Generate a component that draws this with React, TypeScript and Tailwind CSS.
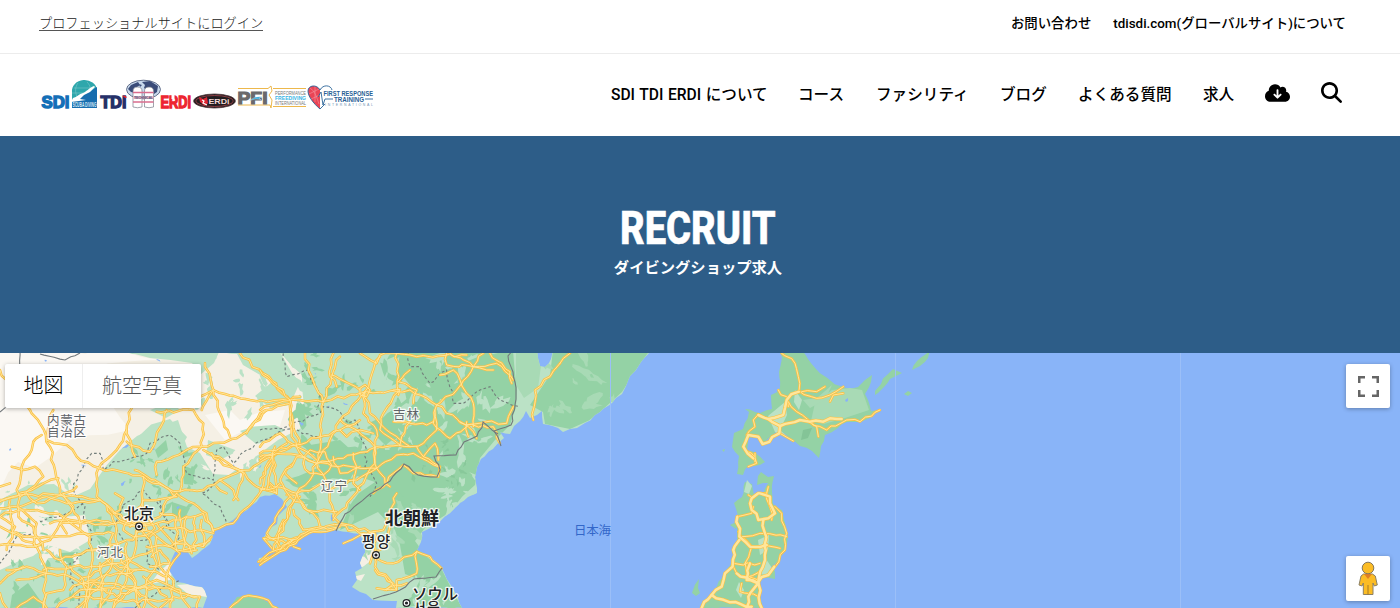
import { FaCloudArrowDown, FaMagnifyingGlass } from 'react-icons/fa6';

const NAV_ITEMS = [
  { label: 'SDI TDI ERDI について', width: 'w-[155px] [word-spacing:0.7px]' },
  { label: 'コース', width: 'w-[46px]' },
  { label: 'ファシリティ', width: 'w-[92px]' },
  { label: 'ブログ', width: 'w-[46px]' },
  { label: 'よくある質問', width: 'w-[93px]' },
  { label: '求人', width: 'w-[30px]' },
];

// Small deterministic generator, so the terrain is the same on every render
function createRandom(seed: number) {
  let s = seed;
  return () => {
    s = (s * 16807) % 2147483647;
    return s / 2147483647;
  };
}

// Breaks every long segment up and nudges the new points, for natural looking lines
function wobble(points: string, amount = 5, seed = 7) {
  const rnd = createRandom(seed + points.length * 31);
  const pts = points.split(' ').map((p) => p.split(',').map(Number));
  const out: string[] = [];
  pts.forEach(([x, y], i) => {
    out.push(`${x},${y}`);
    const next = pts[i + 1];
    if (!next) return;
    const steps = Math.floor(Math.hypot(next[0] - x, next[1] - y) / (amount < 5 ? 5 : 16));
    for (let k = 1; k < steps; k++) {
      const t = k / steps;
      const px = x + (next[0] - x) * t + (rnd() - 0.5) * amount;
      const py = y + (next[1] - y) * t + (rnd() - 0.5) * amount;
      out.push(`${px.toFixed(1)},${py.toFixed(1)}`);
    }
  });
  return out.join(' ');
}

function makePatches(x: number, y: number, w: number, h: number, count: number, size: number, seed: number) {
  const rnd = createRandom(seed);
  return Array.from({ length: count }, () => {
    const cx = x + rnd() * w;
    const cy = y + rnd() * h;
    const r = size * (0.4 + rnd());
    const tilt = rnd() * 3;
    return Array.from({ length: 11 }, (_, k) => {
      const a = (k / 11) * Math.PI * 2;
      const d = r * (0.35 + rnd() * 0.95);
      const dx = Math.cos(a) * d * 1.5;
      const dy = Math.sin(a) * d * 0.6;
      return `${(cx + dx * Math.cos(tilt) - dy * Math.sin(tilt)).toFixed(1)},${(cy + dx * Math.sin(tilt) + dy * Math.cos(tilt)).toFixed(1)}`;
    }).join(' ');
  });
}

const MAINLAND =
  '0,350 537,350 538,358 540,366 545,367 551,359 553,350 651,350 641,362 636,370 630,376 626,386 622,394 616,398 612,403 600,412 585,423 577,428 570,429 563,432 558,428 543,424 542,411 537,415 530,418 526,411 520,421 514,426 510,434 500,432 504,438 497,444 493,449 481,459 477,467 475,477 477,493 468,497 460,503 450,513 437,524 422,532 421,542 417,550 426,555 435,561 442,569 450,584 458,598 462,608 396,608 397,601 373,600 366,594 360,592 352,587 357,580 355,572 362,568 360,563 365,553 366,544 360,534 348,532 336,530 320,531 310,532 296,540 280,549 268,560 258,562 259,558 270,557 277,552 271,545 263,539 267,532 277,524 278,516 287,507 282,499 275,494 260,497 247,510 233,520 221,527 213,533 210,544 202,550 192,558 187,551 175,552 170,565 170,572 177,582 190,585 202,587 207,597 203,608 0,608';

const ISLANDS = [
  '230,608 237,597 250,594 262,599 280,608',
  '780,350 802,350 808,359 816,369 831,381 840,386 850,389 858,387 865,380 872,375 871,382 865,394 868,400 871,411 880,410 868,419 860,422 847,422 838,428 825,435 821,446 819,458 812,451 800,446 785,434 778,430 764,443 758,437 748,438 747,450 754,452 765,462 755,466 749,465 743,475 737,474 739,456 732,447 734,433 743,429 749,412 745,409 760,413 772,409 771,395 780,388 779,372 782,358',
  '757,485 758,476 761,472 768,477 774,476 772,492 773,504 782,510 785,523 788,537 784,552 778,562 770,568 775,571 775,579 763,577 759,588 762,608 701,608 714,592 724,573 731,564 736,545 737,530 739,520 737,512 734,503 742,497 745,482 752,484 754,495 763,495 768,483 763,483',
  '693,590 699,579 698,588 700,593 696,596 692,593',
  '730,525 734,523 739,522 736,529',
  '722,450 725,449 724,452',
  '912,370 917,361 926,354 930,350 928,358 920,366',
  '904,394 908,391 912,393 908,396',
  '875,395 875,391 881,384 887,375 893,369 902,373 896,376 890,379 884,387 878,393',
];

const BEIGE = [
  '0,350 278,350 292,366 302,375 301,428 278,440 258,455 238,468 229,475 213,474 200,453 187,447 178,420 155,428 137,436 120,450 106,466 90,489 72,497 54,484 28,485 0,500',
  '0,518 25,508 42,518 85,515 90,540 70,552 48,545 33,556 0,570',
  '357,570 363,554 374,547 373,559 364,566',
  '352,577 365,574 361,581',
  '177,585 190,584 204,588 207,597 188,594',
  '150,584 176,557 170,580',
];

const PALE = ['0,350 120,350 160,360 90,370 130,430 70,440 35,468 18,462 0,490', '205,415 230,410 240,420 285,410 280,426 245,430 225,440'];

const DARK_LAND = [
  '400,350 513,350 517,390 516,407 510,425 495,440 480,458 475,485 450,512 425,528 415,541 426,556 442,570 462,608 403,608 420,580 405,574 400,545 395,530 378,512 340,530 350,505 375,482 345,472 350,455 390,450 370,430 395,400 410,385 398,370',
  '553,350 650,350 636,370 622,392 600,412 570,429 545,424 543,412 530,405 540,390 550,375',
  '310,445 340,440 360,458 350,480 330,478 305,490 285,480 320,467',
  '12,595 28,583 40,600 48,608 10,608',
  '182,465 195,470 193,485 184,484',
  '155,450 166,440 168,450 158,458',
  '60,553 78,552 72,566 55,562',
  '172,502 190,508 184,520 172,514',
];

const GREEN_IN_BEIGE = [
  '120,350 220,350 214,363 200,375 192,363 150,358',
  '236,352 280,352 292,373 300,382 290,405 270,408 255,396 272,382 255,372 243,365',
  '140,435 170,419 187,437 181,448 188,466 170,456 140,460',
  '20,490 42,482 50,490 30,502 5,509 0,500',
  '208,440 238,451 220,460 206,455',
  '240,431 275,425 285,430 256,444',
  '150,410 172,402 180,410 166,418',
];

type Tile = { x: number; roads: string[] };

// Road lines are kept per map tile, in tile units of a third of a pixel
const ROAD_TILES: Tile[] = [
  {
    x: 0,
    roads: [
      '90,180 120,220 150,290 165,360 180,430 235,500 240,540', '160,180 145,230 140,270 200,285 230,320 300,355 430,380 520,425 610,420 660,390 760,350 900,280',
      '125,255 100,275 95,300 65,350 50,420 60,440', '0,60 20,90 90,180', '35,350 70,360 105,350 130,380 60,440', '0,450 50,440 130,400 175,385',
      '395,175 380,240 350,300 295,355', '380,240 405,320', '380,275 450,305 500,180', '470,185 580,180 610,220 605,290 550,350 540,425',
      '615,40 640,120 605,180', '600,140 640,120 750,150 870,152', '640,120 665,200 690,260', '720,10 790,70 870,150 880,235 900,290',
      '870,152 900,140', '740,250 780,190 870,160', '560,300 605,290 710,265 755,230 800,180',
      '295,355 290,440 320,465 350,540 350,600', '405,360 480,400 530,440 470,450 430,450 400,490', '345,430 370,445 360,480 340,490',
      '470,375 470,335 520,320 560,300', '635,310 670,345 715,360 770,410 830,430', '610,300 670,330 730,370 700,450', '830,310 790,370 785,420 700,520 640,540',
      '530,430 580,460 620,490 640,545', '660,390 700,420 715,450', '650,410 680,430', '880,340 855,370 890,400',
      '830,430 810,400 780,420', '860,280 820,310 830,430',
      '0,455 60,435 180,435 300,450 345,490 416,530', '0,475 50,470 110,520 105,590 150,570 180,520 290,510 416,530',
      '0,500 60,480 160,490 250,520 340,520', '20,600 45,530 0,500', '30,450 40,550 110,590 140,660 130,774', '0,530 70,560 140,560 250,550 340,550',
      '60,440 55,500 100,530 130,600', '240,540 270,560 275,640 250,774', '140,600 180,630 280,600 400,570 416,530', '190,430 220,470 180,520 200,550',
      '80,430 110,460 170,440 230,410', '60,470 140,440 200,460 300,450', '150,520 200,510 240,540', '0,585 80,590 120,585',
      '350,600 330,660 290,720 230,774', '340,550 330,590 280,600', '130,660 220,650 290,650 380,630 460,600', '20,660 80,650 140,670 210,680 290,720 400,710 520,720 590,740',
      '0,700 50,660 70,650', '20,774 0,730', '50,690 140,670', '180,600 200,650 190,720 140,730 130,774',
      '416,530 400,620 350,690 300,774', '416,530 450,570 470,640 440,690 430,774', '416,530 540,510 610,490 640,545', '416,530 480,500 500,450 530,430',
      '416,530 470,560 540,610 510,650 500,700', '416,530 430,480 430,380', '416,530 360,510 320,465', '470,520 520,580 610,590 635,560',
      '370,540 385,510 415,500 450,510 465,535 440,555 400,560 370,540', '390,530 410,515 435,520 440,540 410,545',
      '480,490 530,500 530,600 590,600', '540,480 550,560 575,610', '560,500 550,600 630,570', '585,500 585,600', '605,510 610,590',
      '450,560 490,530 640,550', '440,590 510,590 550,570', '455,620 480,600 510,640 450,650', '470,560 480,650 520,690 510,774',
      '380,580 380,690 340,774', '355,600 420,650 500,680', '210,720 270,690 350,670 440,660', '240,690 300,660 350,600', '260,774 280,700 350,740 470,690 540,720',
      '420,774 400,680 360,620', '250,700 330,700 410,720 470,774', '300,600 330,640 410,660', '170,774 240,720 320,720', '480,774 520,740 600,740 590,774',
      '340,774 390,720 460,710', '540,720 570,774', '50,774 100,740 140,774', '860,435 900,440', '890,440 860,510 820,570 790,565 820,600 900,560',
      '220,740 300,745 380,755 520,750', '300,640 310,700 300,774', '340,650 400,690 420,740', '210,650 250,690 260,740', '430,680 500,740',
      '775,635 830,610 900,565', '850,510 835,560 830,605', '800,560 880,585', '690,774 730,740 790,745 830,774', '0,410 30,400',
    ],
  },
  {
    x: 260,
    roads: [
      '0,60 90,150 95,240 110,290 170,330', '0,180 85,152 185,155 320,125 410,125 450,120 530,165 620,225 700,230 720,280', '135,10 155,80 190,155 175,330',
      '240,20 215,80 190,155', '360,20 330,90 315,125 240,210 190,300 170,340', '315,125 310,190 350,240 345,340 310,400 220,510', '220,10 210,80 230,110', '215,75 300,120',
      '300,10 350,40 360,15 410,10 470,20 620,15', '410,10 415,125 370,190 360,240 420,285', '315,125 330,190 380,240 450,290 490,280 530,240 525,180', '450,60 415,95 470,120 460,160',
      '540,75 580,60 600,90 620,130 640,160 640,230', '530,165 590,120 640,50 670,10', '560,10 560,45 640,50 710,40 760,90', '570,10 640,50 700,60', '690,10 750,65 755,100', '620,225 680,215 740,220 760,170',
      '620,215 625,260', '530,165 520,220 570,265 620,230', '400,215 500,225 520,215', '450,215 425,260 420,285', '0,310 110,285 240,240 300,210', '0,290 60,250 110,290 130,320', '0,400 40,310 0,330',
      '0,320 50,310 130,320 170,340 250,325 350,290 450,290', '170,340 300,355 350,355 410,315 460,310 535,350', '240,210 290,240 345,290 350,355 390,410', '170,340 150,390 110,430 40,600', '170,340 110,320 60,390 90,440 160,490 180,530',
      '170,340 210,420 220,500 240,520', '200,420 290,390 350,355', '30,400 110,430 200,400', '45,290 20,420 60,400', '90,440 70,470 20,550 60,590', '110,430 140,480 230,485', '100,480 130,540 240,530',
      '130,340 150,300 195,305 215,345 190,375 150,370 130,340', '300,115 315,105 330,120 320,140 300,135 300,115', '400,120 420,118 415,135', '600,215 625,230 640,245 650,265',
      '0,635 50,600 150,540 240,525 300,550 370,540 410,430', '0,645 60,605 160,545 230,535', '240,240 260,260 300,240 340,250', '280,310 290,350 280,400 300,420', '220,320 240,370 300,350', '340,430 380,400 400,370 430,345 460,370 535,380 540,350 490,320 470,290',
      '490,320 525,280 535,330', '20,560 100,570 60,600', '100,590 120,597', '240,520 345,550 345,650 390,690 410,720 350,715', '350,625 400,640 470,605 510,620 545,655', '470,605 470,670 410,690 410,720',
      '345,660 400,700 380,720', '375,720 440,700', '330,640 340,610 380,590 390,530', '820,210 825,120 870,80 900,40', '900,40 930,10', '250,580 310,550',
    ],
  },
  {
    x: 680,
    roads: [
      '305,10 345,40 355,80 357,125', '295,120 320,140 325,170', '360,125 410,145 450,135 490,110', '365,125 410,125 435,110', '450,155 460,135 490,130',
      '325,155 350,185 385,210', '390,215 440,240 500,210 540,215 600,180', '385,215 410,230 415,260', '300,250 340,273', '200,255 225,230 220,210 235,193', '190,290 215,310 230,340 205,350', '225,335 225,310',
      '205,435 220,445 235,430 260,430 270,470 275,510', '285,470 305,490 320,550 315,600 285,650', '172,500 215,490 220,470', '185,560 240,550 320,560', '175,545 215,590 195,640 200,690',
      '160,640 190,645 240,640', '160,650 170,670 205,680 235,690', '260,430 265,410', '185,700 180,725 235,740', '205,680 240,665', '250,590 300,595',
    ],
  },
];

const MAIN_ROADS = [
  '357,125 320,150 310,195 265,207 235,195', '265,207 300,228 360,210 390,215 430,215 450,205 485,207', '300,228 298,250 248,282 235,260 205,255 190,290 220,325',
  '235,430 215,445 215,480 235,510 265,505 285,490 270,440 240,430', '250,510 255,550 255,630 235,700 205,740 200,774', '172,500 178,560 210,590 260,585', '178,570 160,600 158,650 135,670 125,710 95,735 65,774',
  '170,670 235,700 245,774', '95,735 150,757 215,770', '210,640 200,690 235,700', '283,650 265,675 235,695',
];

const BORDERS = [
  '0,412 14,400 19,386 20,350', '40,354 65,360 80,353', '513,350 508,356 513,372 516,392 515,405 511,425 494,431 498,437 501,446',
  '498,434 483,422 477,436 464,442 456,455 434,456 440,470 437,477 418,475 404,464 390,481 370,494 345,514 336,531', '373,599 390,594 400,590 414,579 436,577 442,568',
];

const PROVINCES = [
  '110,515 100,550 50,560 35,590 0,640', '220,420 235,370 275,310 300,310 310,360 340,335 440,310 450,280 510,255 540,280 560,370 640,390 650,300 670,290 700,340 740,300 850,240 880,235 940,260 970,260',
  '220,420 255,470 250,510 275,545 265,600 210,640 210,690 240,720 240,774', '120,515 200,490 250,460', '660,390 605,430 660,470 680,520',
  '370,465 430,420 480,470 500,530 440,570 370,570 345,530 370,465', '450,570 440,640 500,660', '480,450 510,540 540,560 520,590', '405,774 490,710 540,690',
  '780,240 860,230 960,190 970,170 1020,185 1045,220 1065,210 1100,300 1095,350 1130,400 1110,440', '850,10 860,80 925,60 960,140 950,180', '1225,10 1230,50 1260,50 1290,100 1340,60 1360,160 1390,160 1440,120 1470,110 1500,150 1560,170',
];

const PATCH_LAYERS = [
  { color: '#94d2a5', items: makePatches(300, 350, 100, 160, 60, 6, 41) },
  { color: '#bbe2c6', items: makePatches(385, 355, 115, 100, 42, 6, 93) },
  { color: '#bbe2c6', items: makePatches(440, 450, 40, 65, 18, 6, 35) },
  { color: '#a8dab5', items: makePatches(350, 500, 80, 60, 16, 5, 71) },
  { color: '#bbe2c6', items: makePatches(400, 560, 50, 45, 12, 4, 61) },
  { color: '#a8dab5', items: makePatches(545, 350, 90, 65, 14, 6, 55) },
  { color: '#94d2a5', items: makePatches(10, 510, 100, 95, 34, 4, 17) },
  { color: '#94d2a5', items: makePatches(120, 450, 80, 60, 24, 3.5, 38) },
  { color: '#f5f0e5', items: makePatches(0, 505, 100, 60, 38, 6, 29) },
  { color: '#f5f0e5', items: makePatches(205, 440, 55, 35, 14, 4, 77) },
  { color: '#bbe2c6', items: makePatches(200, 355, 100, 60, 28, 5, 67) },
  { color: '#bbe2c6', items: makePatches(0, 480, 80, 40, 16, 4, 12) },
  { color: '#89b4f8', items: makePatches(10, 360, 390, 180, 20, 1.6, 19) },
  { color: '#88c89a', items: makePatches(410, 440, 60, 70, 22, 3, 8) },
];

const JAPAN_PATCHES = [
  { color: '#a8dab5', points: '815,403 832,390 850,388 862,390 869,410 845,418 824,424 811,421' },
  { color: '#bbe2c6', points: '768,416 785,402 787,415 780,430 791,440 775,432' },
  { color: '#bbe2c6', points: '795,390 802,400 799,410 794,402' },
  { color: '#a8dab5', points: '803,400 817,398 832,385 825,400 810,408' },
  { color: '#bbe2c6', points: '766,559 772,568 770,576 760,574' },
  { color: '#bbe2c6', points: '739,582 744,590 741,598 736,590' },
  { color: '#bbe2c6', points: '758,540 769,535 768,550 760,555' },
  { color: '#84c497', points: '803,430 812,428 808,438 801,440' },
  { color: '#bbe2c6', points: '744,492 747,480 752,486 749,494' },
  { color: '#89b4f8', points: '845,400 848,398 848,401 846,402' },
];

function Roads({ lines, main }: { lines: string[]; main?: boolean }) {
  return (
    <g fill="none" strokeLinejoin="round" strokeLinecap="round">
      {lines.map((line, i) => (
        <polyline key={`a${i}`} points={wobble(line, 10, i)} stroke="#fbc144" strokeWidth={main ? 11 : 7.5} />
      ))}
      {lines.map((line, i) => (
        <polyline key={`b${i}`} points={wobble(line, 10, i)} stroke="#ffe69b" strokeWidth={main ? 7.5 : 3} />
      ))}
    </g>
  );
}

function CityDot({ x, y }: { x: number; y: number }) {
  return (
    <g>
      <circle cx={x} cy={y} r="3.4" fill="#fff" stroke="#202124" strokeWidth="1.2" />
      <circle cx={x} cy={y} r="1.6" fill="#202124" />
    </g>
  );
}

function MapCanvas() {
  return (
    <svg
      className="block h-full w-full font-['Roboto','Noto_Sans_CJK_JP','Noto_Sans_CJK_KR',sans-serif]"
      viewBox="0 353 1400 255"
      aria-label="地図"
    >
      <defs>
        <clipPath id="land">
          <polygon points={wobble(MAINLAND, 2)} />
        </clipPath>
      </defs>
      <rect y="350" width="1400" height="260" fill="#89b4f8" />
      <polygon points={wobble(MAINLAND, 2)} fill="#bbe2c6" />
      <g clipPath="url(#land)">
        {BEIGE.map((p) => <polygon key={p} points={wobble(p, 9)} fill="#f5f0e5" />)}
        {PALE.map((p) => <polygon key={p} points={wobble(p, 8)} fill="#fbf8f3" />)}
        {GREEN_IN_BEIGE.map((p) => <polygon key={p} points={wobble(p, 8)} fill="#bbe2c6" />)}
        {DARK_LAND.map((p) => <polygon key={p} points={wobble(p, 8)} fill="#94d2a5" />)}
        <polygon points="516,350 538,350 541,366 538,388 524,398 516,385" fill="#a8dab5" />
        {PATCH_LAYERS.map(({ color, items }, i) => (
          <g key={i} fill={color}>{items.map((p) => <polygon key={p} points={p} />)}</g>
        ))}
      </g>
      {ISLANDS.map((p) => <polygon key={p} points={wobble(p, 2)} fill="#94d2a5" />)}
      {JAPAN_PATCHES.map(({ color, points }) => <polygon key={points} points={points} fill={color} />)}
      <path d="M325 533v75M610.500 353v255M895.500 353v255M1180.500 353v255" stroke="#9bbff8" strokeWidth="1" />

      {PROVINCES.map((p) => (
        <polyline
          key={p}
          points={wobble(p, 9)}
          transform="translate(0 350) scale(.33333)"
          fill="none"
          stroke="#727d7a"
          strokeWidth="3.300"
          strokeDasharray="8 7"
        />
      ))}
      {ROAD_TILES.map(({ x, roads }) => (
        <g key={x} transform={`translate(${x} 350) scale(.33333)`}>
          <Roads lines={roads} />
        </g>
      ))}
      <g transform="translate(680 350) scale(.33333)">
        <Roads lines={MAIN_ROADS} main />
      </g>
      {BORDERS.map((p) => <polyline key={p} points={wobble(p, 2)} fill="none" stroke="#73797c" strokeWidth="1.100" />)}

      <CityDot x={139} y={526.500} />
      <CityDot x={376} y={555} />
      <CityDot x={406.500} y={603} />
      <g stroke="#fff" strokeOpacity=".85" strokeWidth="2.500" strokeLinejoin="round" paintOrder="stroke">
        <g fill="#5f6368" fontSize="12.500">
          <text x="47" y="424.500" textLength="39">内蒙古</text>
          <text x="47" y="437" textLength="39">自治区</text>
          <text x="97" y="557" textLength="26">河北</text>
          <text x="393" y="418.500" textLength="26">吉林</text>
          <text x="321" y="491" textLength="26">辽宁</text>
        </g>
        <g fill="#202124" fontWeight="500">
          <text x="124" y="519" fontSize="15" textLength="30">北京</text>
          <text x="362" y="547" fontSize="14.500" textLength="28">평양</text>
          <text x="412" y="600" fontSize="15.500" textLength="46">ソウル</text>
          <text x="413" y="613" fontSize="14" textLength="27">서울</text>
        </g>
        <text x="385" y="525" fontSize="18" fontWeight="700" fill="#202124" textLength="54">北朝鮮</text>
      </g>
      <text x="574" y="535" fontSize="12.500" fill="#3367c9" textLength="37">日本海</text>
    </svg>
  );
}

function BrandLogos() {
  return (
    <svg className="h-8 w-[334px]" viewBox="41 79 334 32" fontFamily="'Liberation Sans', sans-serif" aria-label="SDI TDI ERDI PFI">
      <g fontWeight="900" fontSize="17" strokeWidth="1.400">
        <text x="41.500" y="107.500" fill="#136fb7" stroke="#136fb7" textLength="28" lengthAdjust="spacingAndGlyphs">SDi</text>
        <text x="100.500" y="107.500" fill="#252f68" stroke="#252f68" textLength="26" lengthAdjust="spacingAndGlyphs">TDi</text>
        <text x="160.500" y="107.500" fill="#ed2530" stroke="#ed2530" textLength="30.500" lengthAdjust="spacingAndGlyphs">ERDi</text>
      </g>
      <path d="M123.500 96l3 1.500" stroke="#ed2530" strokeWidth="1.500" />
      {/* diver over a globe */}
      <path d="M72 99V92a12.500 11 0 0 1 25-2v12H72z" fill="#2fa7ac" />
      <path d="M74 88h20M72 93h22M78 83c-3 4-3 9-1 14M87 82c4 4 4 8 2 13" stroke="#87cdcf" strokeWidth=".5" fill="none" />
      <path d="M72 101c8-3 17-9 25-14v21H72z" fill="#176dae" />
      <path d="M73 98c4-1 6-4 10-5 3-1 6-5 11-7l1 1-5 5-6 3-4 4 6 1-7 1-8 1z" fill="#fff" />
      <text x="72.500" y="107.300" fontSize="6.500" fontWeight="700" fill="#d7e8f4" textLength="24" lengthAdjust="spacingAndGlyphs">SCUBA DIVING</text>
      {/* twin tanks in front of the world map */}
      <ellipse cx="143.500" cy="89.500" rx="17" ry="9.300" fill="#c8d9ec" stroke="#56627f" strokeWidth=".9" />
      <path d="M128 89l3-4 7-3 2 3-3 2-3 1 1 5-4-1zM142 82l8-1 8 5-1 6-3 2-1-5-3-2-2 4-4-3 1-3zM139 84l3 1-2 2z" fill="#3a4c79" />
      <path d="M133 107V91q0-4 4.500-4t4.500 4v16q-4.500 1.500-9 0zM144.500 107V91q0-4 4.500-4t4.500 4v16q-4.500 1.500-9 0z" fill="#fff" stroke="#787c8a" strokeWidth=".7" />
      <path d="M133 92.500h20.500M133 102h20.500" stroke="#d96d8e" strokeWidth="1.300" />
      <path d="M133.500 97.500h20" stroke="#e3a4b8" strokeWidth="2.500" />
      <text x="134" y="98.700" fontSize="3.500" fontWeight="700" fill="#555c7c" textLength="19">TECHNICAL</text>
      <path d="M171.500 95h3v4h-3z" fill="#fff" />
      <ellipse cx="214.500" cy="101" rx="20.800" ry="7" fill="#211d20" stroke="#4b3034" strokeWidth=".8" />
      <ellipse cx="214.500" cy="101" rx="18.800" ry="5.500" fill="none" stroke="#b74a51" strokeWidth=".7" />
      <path d="M199 97l4 2 4-2 1 6-3 3-5-4z" fill="#dc2633" />
      <path d="M202 100l2 1-1 2 4 2" stroke="#fff" strokeWidth="1.200" fill="none" />
      <text x="208.500" y="103.800" fontSize="7" fontWeight="700" fill="#f1d7d7" textLength="21" lengthAdjust="spacingAndGlyphs">ERDi</text>
      <path d="M238 88.500h30l3-2.500 1 5-3 4 3 5-1 8-1-3H238M273 88.500h33M273 106.500h33" fill="none" stroke="#edb84c" strokeWidth="1" />
      <text x="237.500" y="104" fontSize="16" fontWeight="900" fill="#69696b" stroke="#69696b" strokeWidth="1.100" textLength="30" lengthAdjust="spacingAndGlyphs">PFI</text>
      <path d="M249 101c5-4 9-5 14-4l-4 1 2 2c-4-2-7-1-12 1z" fill="#35aadd" stroke="#fff" strokeWidth=".3" />
      <g fontSize="4.600" fill="#76777a">
        <text x="275" y="94.500" textLength="31" lengthAdjust="spacingAndGlyphs">PERFORMANCE</text>
        <text x="275" y="99.700" fill="#36b4e5" fontWeight="700" textLength="31" lengthAdjust="spacingAndGlyphs">FREEDIVING</text>
        <text x="275" y="104.600" textLength="31" lengthAdjust="spacingAndGlyphs">INTERNATIONAL</text>
      </g>
      <path d="M320 109c-8-7-12-13-12-18 0-6 9-7 12-1z" fill="#ea4455" />
      <path d="M310 88c5 3 7 10 9 16M309 94l10-5M311 99l9-4M315 86v16" stroke="#f596a0" strokeWidth=".6" fill="none" />
      <path d="M320 109c-7-6-12-13-12-18 0-6 9-7 12-1 3-6 11-5 12 0M320 109l5-5M318 97l3-5 2 13 2-6h8M365 99h8" fill="none" stroke="#296397" strokeWidth=".9" />
      <g fill="#276095" fontWeight="700" fontSize="7">
        <text x="323.500" y="96.200" textLength="49.500" lengthAdjust="spacingAndGlyphs">FIRST RESPONSE</text>
        <text x="334" y="102.200" textLength="30" lengthAdjust="spacingAndGlyphs">TRAINING</text>
      </g>
      <text x="325" y="106" fontSize="3.500" fill="#7395b4" textLength="48">INTERNATIONAL</text>
    </svg>
  );
}

function Pegman() {
  return (
    <svg width="20" height="36" viewBox="0 0 20 36">
      <path d="M5.500 13h9l2.800 2 2 9-3 1-1.300-3v11.500H5.300V22L4 25l-3-1 2-9z" fill="#fbbc25" stroke="#8b8066" strokeWidth="1" />
      <path d="M10 24v10" stroke="#a47b29" strokeWidth="1" />
      <path d="M6 13h8l-4 5z" fill="#df7f26" />
      <circle cx="10" cy="7" r="5.800" fill="#fbbc25" stroke="#85775b" strokeWidth="1" />
    </svg>
  );
}

export default function App() {
  return (
    <div className="flex h-[608px] w-[1400px] flex-col overflow-hidden bg-white font-['Roboto','Noto_Sans_CJK_JP',sans-serif] text-black">
      <div className="flex h-[54px] shrink-0 items-start justify-between border-b border-[#ececec] pl-[39px] pr-[54px] pt-[15px] text-[13.2px] leading-[18px]">
        <a href="#login" className="h-4 whitespace-nowrap border-b border-[#555] font-light leading-[18px] text-[#222]">
          プロフェッショナルサイトにログイン
        </a>
        <div className="flex gap-[22px] whitespace-nowrap text-[13.4px] font-medium">
          <a href="#contact">お問い合わせ</a>
          <a href="#global">tdisdi.com(グローバルサイト)について</a>
        </div>
      </div>

      <header className="flex h-[82px] shrink-0 items-center justify-between pl-[41px] pr-[58px]">
        <BrandLogos />
        <nav className="flex items-center gap-8 text-[15.6px] font-medium">
          {NAV_ITEMS.map(({ label, width }) => (
            <a key={label} href="#nav" className={`${width} -mr-px ml-px whitespace-nowrap pt-0.5`}>
              {label}
            </a>
          ))}
          <FaCloudArrowDown className="-mr-px mb-1 ml-px h-5 w-[25px]" />
          <FaMagnifyingGlass className="mb-1 size-[21px]" />
        </nav>
      </header>

      <section className="flex h-[217px] shrink-0 flex-col items-center bg-[#2d5d88] pr-1 pt-[67px] text-white">
        <h1 className="scale-x-[0.83] text-[46px] font-extrabold leading-[50px] [-webkit-text-stroke:0.6px_white]">RECRUIT</h1>
        <p className="mt-[3px] text-[15.3px] font-bold leading-6">ダイビングショップ求人</p>
      </section>

      <main className="relative h-[255px] shrink-0">
        <MapCanvas />
        <div className="absolute left-[5px] top-[11px] flex h-11 rounded-xs bg-white text-[20px] leading-[41px] shadow-[0_1px_4px_rgba(0,0,0,0.3)]">
          <button type="button" className="w-[78px] border-r border-[#eee] font-light">地図</button>
          <button type="button" className="w-[118px] font-light text-[#565656]">航空写真</button>
        </div>
        <button type="button" className="absolute right-2.5 top-[11px] grid h-11 w-11 place-items-center rounded-xs bg-white shadow-[0_1px_4px_rgba(0,0,0,0.3)]" aria-label="全画面">
          <svg width="21" height="21" viewBox="0 0 21 21" fill="none" stroke="#666" strokeWidth="2.500">
            <path d="M1.250 7V1.250H7M14 1.250h5.750V7M19.750 14v5.750H14M7 19.750H1.250V14" />
          </svg>
        </button>
        <button type="button" className="absolute bottom-[7px] right-2.5 grid h-[45px] w-11 place-items-center rounded-xs bg-white shadow-[0_1px_4px_rgba(0,0,0,0.3)]" aria-label="ストリートビュー">
          <Pegman />
        </button>
      </main>
    </div>
  );
}
